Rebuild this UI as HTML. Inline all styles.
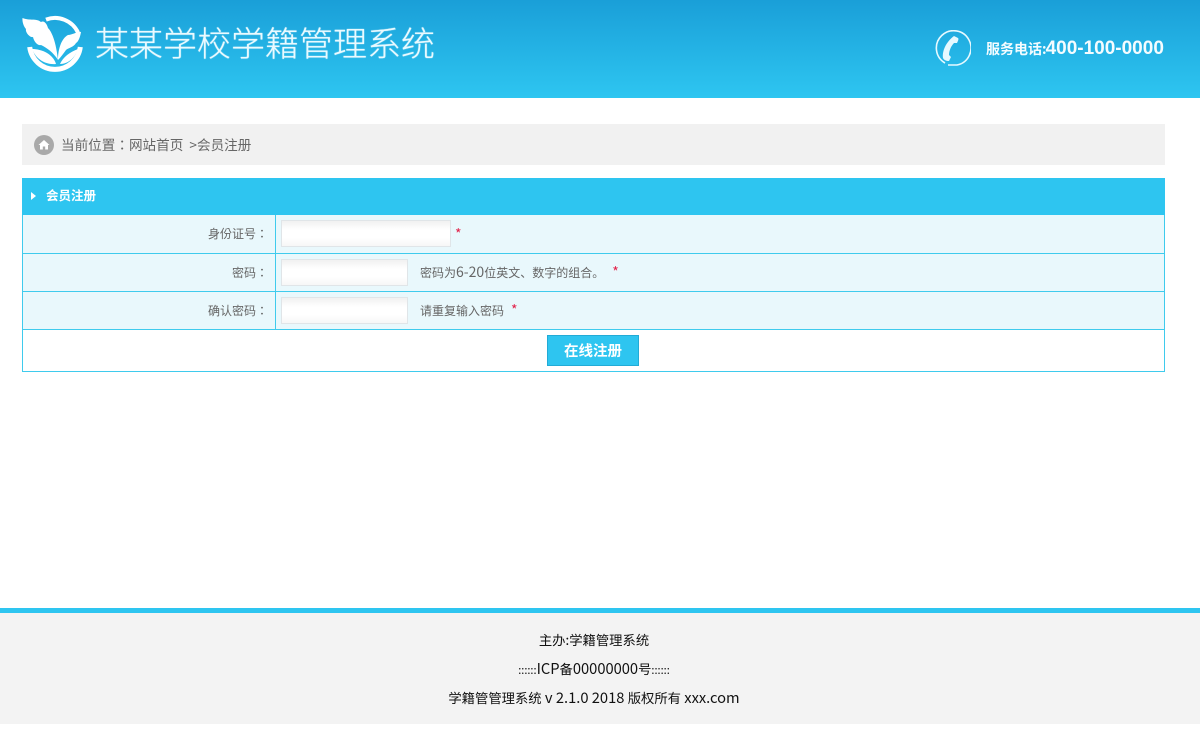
<!DOCTYPE html>
<html><head><meta charset="utf-8"><style>
html,body{margin:0;padding:0;background:#fff}
body{width:1200px;height:754px;position:relative;overflow:hidden;font-family:"Noto Sans CJK SC","Liberation Sans",sans-serif;font-size:12px;color:#666;filter:blur(.3px)}
.a{position:absolute;white-space:nowrap}
.in{position:absolute;box-sizing:border-box;height:27px;border:1px solid #e0e5e8;background:linear-gradient(#f1f1f1,#fff 35%,#fff 65%,#f6f6f6)}
.row{position:absolute;left:22px;width:1143px;box-sizing:border-box;background:#e9f8fc;border-left:1px solid #3fcbed;border-right:1px solid #3fcbed;border-bottom:1px solid #3fcbed}
.r{color:#e2234a;font-size:14px;line-height:0}
.c{font-family:"Noto Sans CJK TC",sans-serif}
.l{font-size:14.700px;line-height:0}
.f{left:0;width:1188px;text-align:center;font-size:13.330px;line-height:18px;color:#111}
</style></head><body>
<div class="a" style="left:0;top:0;width:1200px;height:98px;background:linear-gradient(#1a9fd8,#2ec6f1)"></div>
<svg class="a" style="left:20px;top:14px" width="66" height="60" viewBox="20 14 66 60">
<path d="M46 19.600A25.500 25.500 0 0 1 78 32.500" fill="none" stroke="#fff" stroke-width="4"/>
<path d="M29.700 47A25.500 25.500 0 0 0 80.300 47" fill="none" stroke="#fff" stroke-width="5"/>
<path d="M22.500 18C30 21 36 18 41 22C44 20 47 24 48 28C52 32 56 42 58 60C53 52 47 48 41 45C38 46 34 42 33 37C30 38 25 32 26 29C24 27 22 22 22.500 18Z" fill="#fff"/>
<path d="M58 60C58 48 62 38 68 35C72 35 78 31 81 32C80 38 78 42 76 43C74 47 68 48 66 50C63 54 61 57 58 60Z" fill="#fff"/>
<path d="M32 49C42 49 53 54 56 64C45 65 36 59 32 49Z" fill="#fff"/>
<path d="M60 64C63 57 70 52 78 49C75 58 68 64 60 64Z" fill="#fff"/>
</svg>
<div class="a" style="left:95px;top:17px;font-size:34px;line-height:50px;color:#eafaff;font-weight:300;text-shadow:0 0 1px #eafaff">某某学校学籍管理系统</div>
<svg class="a" style="left:933px;top:30px" width="38" height="38" viewBox="0 0 38 38">
<path d="M12 33A17.300 17.300 0 1 1 24 35L15 35" fill="none" stroke="#e6f9ff" stroke-width="1.600"/>
<path d="M21 6L25 8C26 9 25 11 24 13L21 13C18 16 16 21 16 25L18 27L16 31C13 31 11 30 10 28C9 21 13 12 21 6Z" fill="#e6f9ff"/>
</svg>
<div class="a" style="left:986px;top:38px;line-height:22px;color:#f4fcff;font-weight:bold;font-size:14px">服务电话:<span style="font-size:19px;font-family:'Liberation Sans',sans-serif;margin-left:-1px">400-100-0000</span></div>

<div class="a" style="left:22px;top:124px;width:1143px;height:41px;background:#f1f1f1"></div>
<svg class="a" style="left:34px;top:135px" width="20" height="20" viewBox="0 0 20 20"><circle cx="10" cy="10" r="10" fill="#a9a9a9"/><path d="M10 5L15.500 10H14V14.500H11.200V11.500H8.800V14.500H6V10H4.500Z" fill="#fff"/></svg>
<div class="a" style="left:61px;top:134px;font-size:13.600px;line-height:20px;color:#666">当前位置<span class="c">：</span>网站首页 &nbsp;&gt;会员注册</div>

<div class="a" style="left:22px;top:178px;width:1143px;height:37px;background:#2ec5f0"></div>
<div class="a" style="left:31px;top:192px;width:0;height:0;border-left:5px solid #fff;border-top:4px solid transparent;border-bottom:4px solid transparent"></div>
<div class="a" style="left:46px;top:186px;font-size:12.500px;line-height:18px;font-weight:bold;color:#fff">会员注册</div>

<div class="row" style="top:215px;height:39px"></div>
<div class="row" style="top:254px;height:38px"></div>
<div class="row" style="top:292px;height:38px"></div>
<div class="a" style="left:22px;top:330px;width:1143px;height:42px;box-sizing:border-box;border:1px solid #3fcbed;border-top:0"></div>
<div class="a" style="left:275px;top:215px;width:1px;height:115px;background:#3fcbed"></div>

<div class="a c" style="right:932px;top:225px;line-height:18px">身份证号：</div>
<div class="a c" style="right:932px;top:264px;line-height:18px">密码：</div>
<div class="a c" style="right:932px;top:302px;line-height:18px">确认密码：</div>

<div class="in" style="left:281px;top:220px;width:170px"></div>
<div class="in" style="left:281px;top:259px;width:127px"></div>
<div class="in" style="left:281px;top:297px;width:127px"></div>
<div class="a r" style="left:455px;top:225px;line-height:18px">*</div>
<div class="a" style="left:420px;top:264px;line-height:18px">密码为<span style="font-size:14px;line-height:0">6-20</span>位英文、数字的组合。<span class="r" style="margin-left:8px">*</span></div>
<div class="a" style="left:420px;top:302px;line-height:18px">请重复输入密码<span class="r" style="margin-left:7px">*</span></div>

<div class="a" style="left:547px;top:335px;width:92px;height:31px;box-sizing:border-box;background:#2ec5f0;border:1px solid #22abd6;color:#fff;font-weight:bold;font-size:14.500px;line-height:29px;text-align:center">在线注册</div>

<div class="a" style="left:0;top:608px;width:1200px;height:5px;background:#2ec5f0"></div>
<div class="a" style="left:0;top:613px;width:1200px;height:111px;background:#f3f3f3"></div>
<div class="a f" style="top:631px">主办:学籍管理系统</div>
<div class="a f" style="top:660px"><span style="font-size:11px;line-height:0">::::::</span><span class="l">ICP</span>备<span class="l">00000000</span>号<span style="font-size:11px;line-height:0">::::::</span></div>
<div class="a f" style="top:689px">学籍管管理系统<span class="l"> v 2.1.0 2018 </span>版权所有<span class="l"> xxx.com</span></div>
</body></html>
